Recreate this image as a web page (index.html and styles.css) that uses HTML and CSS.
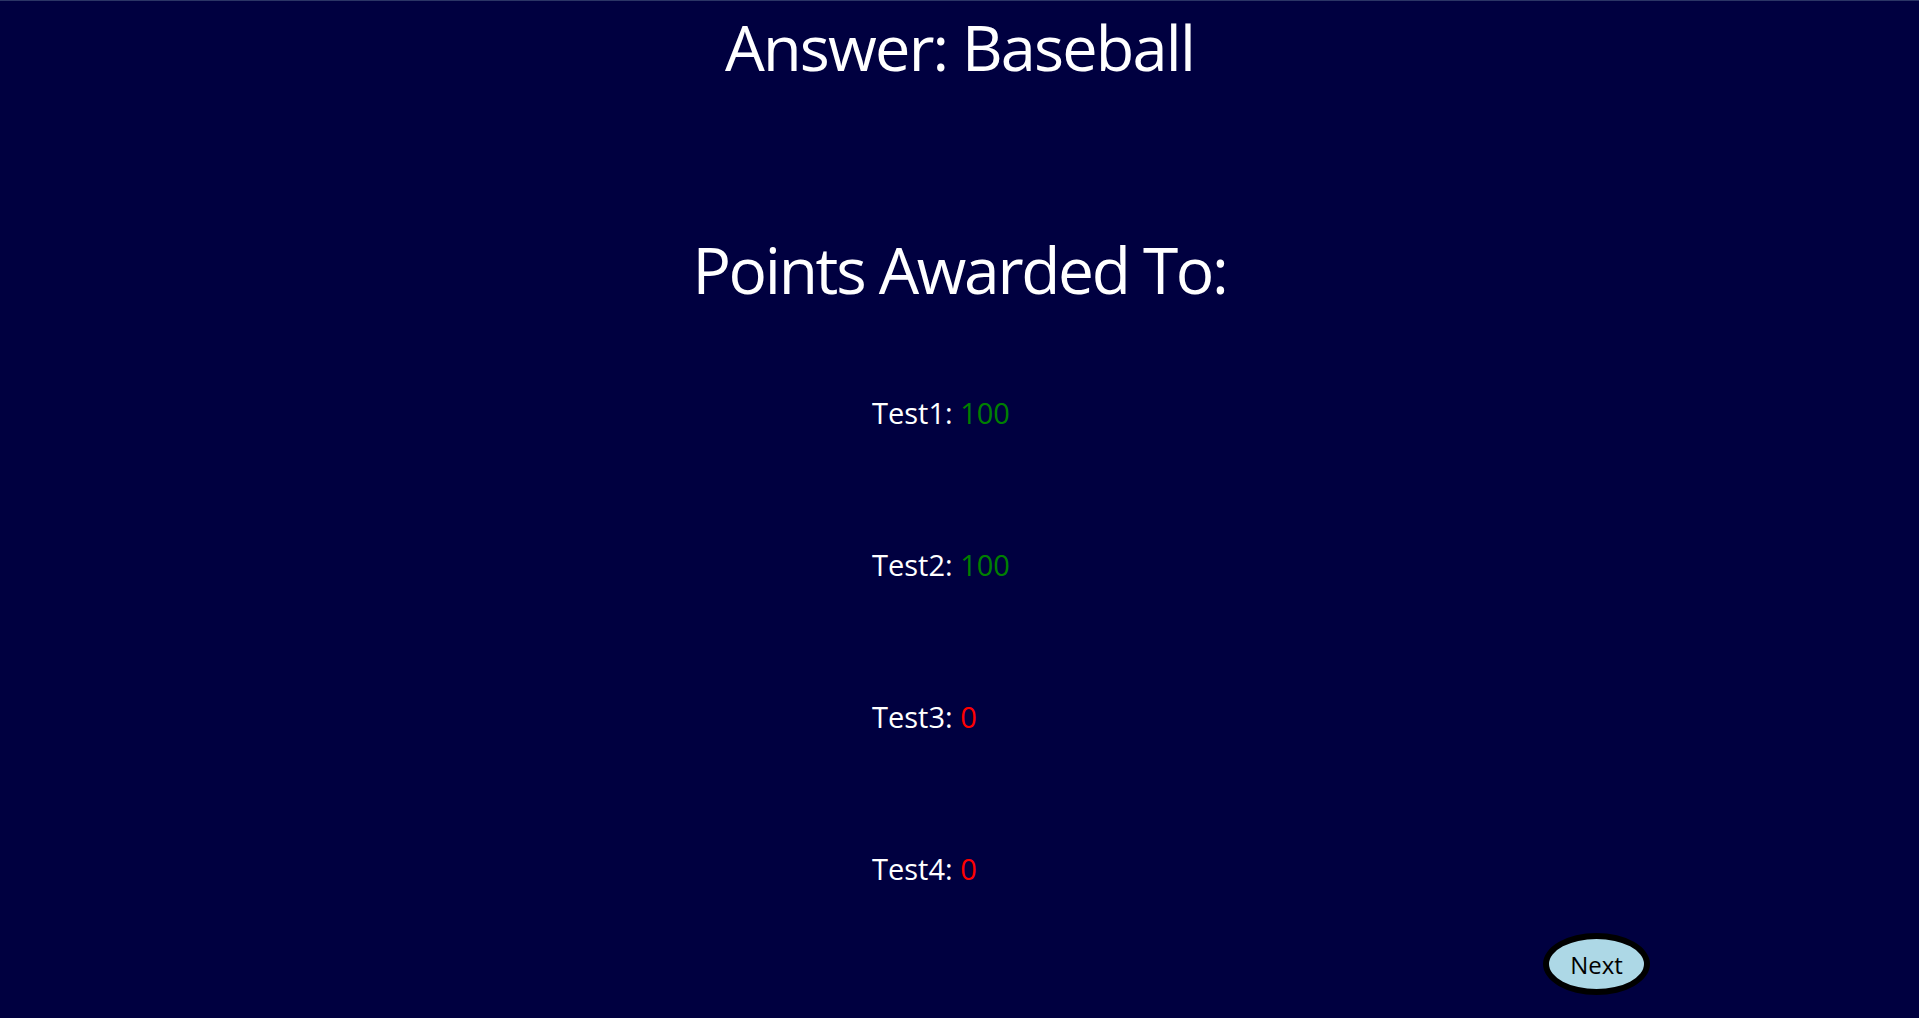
FILE: index.html
```html
<!DOCTYPE html>
<html>
<head>
<meta charset="utf-8">
<link rel="stylesheet" href="styles.css">
</head>
<body>
<div class="page">
  <h1 class="answer">Answer: Baseball</h1>
  <h2 class="awarded">Points Awarded To:</h2>
  <div class="scores">
    <div class="row">Test1: <span class="gain">100</span></div>
    <div class="row">Test2: <span class="gain">100</span></div>
    <div class="row">Test3: <span class="loss">0</span></div>
    <div class="row">Test4: <span class="loss">0</span></div>
  </div>
  <div class="actions">
    <button class="next">Next</button>
  </div>
</div>
</body>
</html>
```
FILE: styles.css
```css
html, body {
  margin: 0;
  padding: 0;
  background: #000040;
  height: 100%;
}
body {
  border-top: 1px solid #2b3566;
  box-sizing: border-box;
  font-family: "Open Sans", "Noto Sans", sans-serif;
  color: #ffffff;
  overflow: hidden;
}
.page {
  display: flex;
  flex-direction: column;
  align-items: center;
}
.answer {
  margin: 0;
  font-size: 63px;
  font-weight: 400;
  letter-spacing: -1.8px;
  line-height: 91px;
  text-align: center;
}
.awarded {
  margin: 130px 0 0;
  font-size: 64px;
  font-weight: 400;
  letter-spacing: -2.3px;
  line-height: 96px;
  text-align: center;
}
.scores {
  align-self: stretch;
  display: flex;
  flex-direction: column;
  padding-left: 872px;
  margin-top: 74px;
  gap: 110px;
}
.row {
  font-size: 29px;
  line-height: 42px;
}
.gain { color: #008000; }
.loss { color: #ff0000; }
.actions {
  align-self: stretch;
  display: flex;
  justify-content: flex-end;
  padding-right: 269px;
  margin-top: 43px;
}
.next {
  width: 107px;
  height: 62px;
  border: 6px solid #000000;
  border-radius: 50%;
  background: #add8e6;
  color: #000000;
  font-family: "Open Sans", "Noto Sans", sans-serif;
  font-size: 24px;
  padding: 0;
}
```
